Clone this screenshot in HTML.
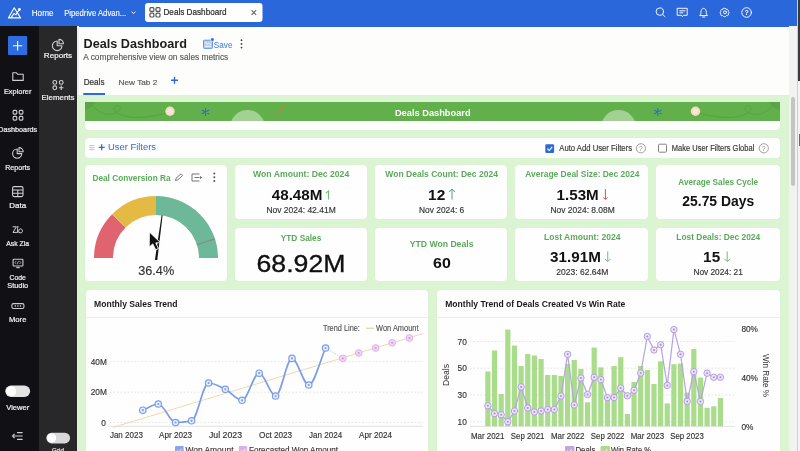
<!DOCTYPE html><html><head><meta charset="utf-8"><style>
*{margin:0;padding:0;box-sizing:border-box}
html,body{width:800px;height:451px;overflow:hidden;background:#fdfdfc;font-family:"Liberation Sans",sans-serif;position:relative}
.abs{position:absolute}
.card{position:absolute;background:#fefefe;border-radius:5px;box-shadow:0 0 1px rgba(0,0,0,0.06)}
svg{position:absolute;left:0;top:0;overflow:visible;will-change:transform}
text{font-family:"Liberation Sans",sans-serif}
</style></head><body>
<div class="abs" style="left:0;top:0;width:797px;height:27px;background:#2967da"></div>
<div class="abs" style="left:797px;top:0;width:3px;height:451px;background:#f3f3f3;border-left:1px solid #cfcfcf"></div>
<div class="abs" style="left:798px;top:0;width:2px;height:81px;background:#3a393b"></div>
<div class="abs" style="left:799px;top:134px;width:1px;height:12px;background:#3b6fd0"></div>
<div class="abs" style="left:0;top:26px;width:38.5px;height:425px;background:#111015"></div>
<div class="abs" style="left:38.5px;top:26px;width:38.5px;height:425px;background:#28272a"></div>
<div class="abs" style="left:77px;top:26px;width:2px;height:69px;background:#f0f0f0"></div>
<div class="abs" style="left:77px;top:95px;width:712px;height:356px;background:#dbf4d2"></div>
<div class="abs" style="left:789px;top:26px;width:8px;height:425px;background:#f2f2f2"></div>
<div class="abs" style="left:790.5px;top:97px;width:4.7px;height:89px;background:#c4c4c4;border-radius:3px"></div>
<div class="card" style="left:85px;top:102px;width:695px;height:28px;border-radius:0 0 4px 4px"></div>
<div class="card" style="left:85px;top:137.5px;width:695px;height:20px;border-radius:4px"></div>
<div class="card" style="left:85px;top:165px;width:142px;height:116px;border-radius:4px"></div>
<div class="card" style="left:235px;top:165px;width:132px;height:54px;border-radius:4px"></div>
<div class="card" style="left:375px;top:165px;width:132px;height:54px;border-radius:4px"></div>
<div class="card" style="left:515px;top:165px;width:133px;height:54px;border-radius:4px"></div>
<div class="card" style="left:656px;top:165px;width:124px;height:54px;border-radius:4px"></div>
<div class="card" style="left:235px;top:228px;width:132px;height:53px;border-radius:4px"></div>
<div class="card" style="left:375px;top:228px;width:132px;height:53px;border-radius:4px"></div>
<div class="card" style="left:515px;top:228px;width:133px;height:53px;border-radius:4px"></div>
<div class="card" style="left:656px;top:228px;width:124px;height:53px;border-radius:4px"></div>
<div class="card" style="left:85.5px;top:290px;width:342px;height:170px;border-radius:4px"></div>
<div class="card" style="left:436.5px;top:290px;width:343.5px;height:170px;border-radius:4px"></div>
<div class="abs" style="left:85.5px;top:316.5px;width:342px;height:1px;background:#eeeeee"></div>
<div class="abs" style="left:436.5px;top:316.5px;width:343.5px;height:1px;background:#eeeeee"></div>
<svg width="800" height="451" viewBox="0 0 800 451">
<g fill="none" stroke="#fff" stroke-width="1.1" stroke-linejoin="round" stroke-linecap="round">
<path d="M14.2 7.8 L8.4 17.9 L20.5 17.9 Z"/><path d="M11.2 17.4 L14.2 13.4 L15.9 14.8 L19.2 9.7"/></g>
<circle cx="19.4" cy="9.5" r="1.4" fill="#fff"/>
<path d="M131.5 11.6 L133.5 13.6 L135.5 11.6" fill="none" stroke="#fff" stroke-width="1"/>
<g fill="none" stroke="#fff" stroke-width="0.95" stroke-linecap="round" stroke-linejoin="round">
<circle cx="659.8" cy="11.6" r="3.7"/><path d="M662.5 14.3 L665 16.7"/>
<path d="M677.6 8.3 h9.6 v7 h-3.8 l-1 1.3 l-1 -1.3 h-3.8 z"/><path d="M679.8 10.8 h5.2 M679.8 12.8 h3"/>
<path d="M700 15.3 c0.8 -0.8 0.9 -1.6 0.9 -3 c0 -2.2 1.1 -3.9 2.7 -3.9 c1.6 0 2.7 1.7 2.7 3.9 c0 1.4 0.1 2.2 0.9 3 z"/><path d="M702.6 17 h2.2"/>
<circle cx="725" cy="12.3" r="1.5"/>
<g transform="translate(725,12.3) scale(0.78) translate(-725,-12.4)">
<path d="M725 7.4 l1.5 .4 .5 1.3 1.4 -.3 1 1 -.4 1.4 1 1 .1 1.4 -1.1 .9 .3 1.4 -1 1 -1.4 -.3 -1 1 -1.5 .5 -1.5 -.5 -.9 -1 -1.4 .3 -1 -1 .3 -1.4 -1.1 -.9 .1 -1.4 1 -1 -.4 -1.4 1 -1 1.4 .3 .5 -1.3 z" stroke-width="1.2"/></g>
<circle cx="746.6" cy="12.5" r="4.8"/></g>
<text x="746.6" y="15.1" font-size="7" font-weight="bold" fill="#fff" text-anchor="middle">?</text>
<rect x="145" y="3" width="117.5" height="19" rx="3" fill="#fff"/>
<g fill="none" stroke="#555" stroke-width="1.2">
<rect x="149.9" y="7.6" width="4" height="3.8" rx="1"/><rect x="156" y="7.6" width="4" height="3.8" rx="1"/>
<rect x="149.9" y="13.2" width="4" height="3.8" rx="1"/><rect x="156" y="13.2" width="4" height="3.8" rx="1"/></g>
<path d="M251.5 10.2 l4.7 4.7 M256.2 10.2 l-4.7 4.7" stroke="#666" stroke-width="1.1"/>

<text x="31.75" y="16" font-size="9.2" font-weight="normal" fill="#fff" text-anchor="start" textLength="21.7" lengthAdjust="spacingAndGlyphs" stroke="#fff" stroke-width="0.12">Home</text>
<text x="64.15" y="16" font-size="9.2" font-weight="normal" fill="#fff" text-anchor="start" textLength="62.1" lengthAdjust="spacingAndGlyphs" stroke="#fff" stroke-width="0.12">Pipedrive Advan...</text>
<text x="163.47" y="15.4" font-size="8.8" font-weight="normal" fill="#2a2a2a" text-anchor="start" textLength="63.06" lengthAdjust="spacingAndGlyphs" stroke="#2a2a2a" stroke-width="0.2">Deals Dashboard</text>
<rect x="8" y="36" width="19.2" height="19" rx="1" fill="#2d6de0"/>
<path d="M17.6 41 v9.4 M12.9 45.7 h9.4" stroke="#fff" stroke-width="1.15"/>
<g fill="none" stroke="#cfcfd2" stroke-width="1.1" stroke-linejoin="round" transform="translate(0,26)">
<path d="M12.8 46.8 h3.6 l1.2 1.4 h5.6 v6.2 h-10.4 z"/>
<rect x="13.1" y="84.4" width="3.7" height="3.7" rx="1"/><rect x="19.2" y="84.4" width="3.7" height="3.7" rx="1"/>
<rect x="13.1" y="90.4" width="3.7" height="3.7" rx="1"/><rect x="19.2" y="90.4" width="3.7" height="3.7" rx="1"/>
<path d="M17.2 123 a4.6 4.6 0 1 0 4.6 4.6 h-4.6 z"/><path d="M19 121.6 a4.2 4.2 0 0 1 4.2 4.2 h-4.2 z"/>
<rect x="12.6" y="160.6" width="10.4" height="10" rx="1.5"/><path d="M12.6 164 h10.4 M12.6 167.3 h10.4 M17.8 164 v6.6"/>
<rect x="13.1" y="233.2" width="9.8" height="6.8" rx="0.8"/><path d="M16.3 241.6 h3.4"/>
<path d="M16.2 235 l-1.2 1.5 1.2 1.5 M19.6 235 l1.2 1.5 -1.2 1.5 M18.5 234.8 l-1.2 3.5" stroke-width="0.7"/>
<rect x="11.9" y="277.6" width="12" height="4.9" rx="1.5"/>
<path d="M57.2 15 a4.8 4.8 0 1 0 4.8 4.8 h-4.8 z"/><path d="M59 13.4 a4.4 4.4 0 0 1 4.4 4.4 h-4.4 z"/>
<circle cx="54.8" cy="56.4" r="1.9"/><circle cx="61.2" cy="56.4" r="1.9"/>
<circle cx="54.8" cy="61.8" r="1.9"/><path d="M61.2 59.6 v4.4 M59 61.8 h4.4"/>
<path d="M12.4 410 l2.2 -2.2 M12.4 410 l2.2 2.2"/><path d="M17 406.6 h5.6 M13 410 h9.6 M17 413.4 h5.6"/>
</g>
<g fill="#e6e6e8"><circle cx="15.3" cy="306" r="0.75"/><circle cx="17.9" cy="306" r="0.75"/><circle cx="20.5" cy="306" r="0.75"/></g>
<g fill="none" stroke="#e6e6e8" stroke-width="0.9" stroke-linejoin="round" stroke-linecap="round">
<path d="M13 226.8 h3.4 l-3.4 5.6 h3.6"/><path d="M17.6 228.6 v3.8"/><circle cx="17.6" cy="227" r="0.3"/>
<path d="M19 232.4 c-1 -1.2 0 -3.6 1.6 -3.6 c1.6 0 2.4 2.4 1.4 3.6 c-0.6 0.6 -2.4 0.6 -3 0 z"/></g>
<rect x="5.3" y="385.5" width="24.8" height="11.5" rx="5.75" fill="#e3e3e3"/><circle cx="11.2" cy="391.25" r="5" fill="#fff"/>
<rect x="46.3" y="432.8" width="23.8" height="10.6" rx="5.3" fill="#d8d8d8"/><circle cx="51.6" cy="438.1" r="4.6" fill="#fff"/>

<text x="17.7" y="94.3" font-size="7.6" font-weight="normal" fill="#f0f0f2" text-anchor="middle" textLength="27.51" lengthAdjust="spacingAndGlyphs" stroke="#f0f0f2" stroke-width="0.22">Explorer</text>
<text x="17.7" y="132" font-size="7.6" font-weight="normal" fill="#f0f0f2" text-anchor="middle" textLength="38.91" lengthAdjust="spacingAndGlyphs" stroke="#f0f0f2" stroke-width="0.22">Dashboards</text>
<text x="17.7" y="170" font-size="7.6" font-weight="normal" fill="#f0f0f2" text-anchor="middle" textLength="24.91" lengthAdjust="spacingAndGlyphs" stroke="#f0f0f2" stroke-width="0.22">Reports</text>
<text x="17.7" y="208.3" font-size="7.6" font-weight="normal" fill="#f0f0f2" text-anchor="middle" textLength="16.91" lengthAdjust="spacingAndGlyphs" stroke="#f0f0f2" stroke-width="0.22">Data</text>
<text x="17.7" y="245.6" font-size="7.6" font-weight="normal" fill="#f0f0f2" text-anchor="middle" textLength="22.91" lengthAdjust="spacingAndGlyphs" stroke="#f0f0f2" stroke-width="0.22">Ask Zia</text>
<text x="17.7" y="280" font-size="7.6" font-weight="normal" fill="#f0f0f2" text-anchor="middle" textLength="16.41" lengthAdjust="spacingAndGlyphs" stroke="#f0f0f2" stroke-width="0.22">Code</text>
<text x="17.7" y="288.3" font-size="7.6" font-weight="normal" fill="#f0f0f2" text-anchor="middle" textLength="20.91" lengthAdjust="spacingAndGlyphs" stroke="#f0f0f2" stroke-width="0.22">Studio</text>
<text x="17.7" y="322" font-size="7.6" font-weight="normal" fill="#f0f0f2" text-anchor="middle" textLength="17.41" lengthAdjust="spacingAndGlyphs" stroke="#f0f0f2" stroke-width="0.22">More</text>
<text x="17.7" y="410.4" font-size="7.6" font-weight="normal" fill="#f0f0f2" text-anchor="middle" textLength="22.91" lengthAdjust="spacingAndGlyphs" stroke="#f0f0f2" stroke-width="0.22">Viewer</text>
<text x="58" y="58" font-size="7.6" font-weight="normal" fill="#f0f0f2" text-anchor="middle" textLength="28.31" lengthAdjust="spacingAndGlyphs" stroke="#f0f0f2" stroke-width="0.22">Reports</text>
<text x="58" y="99.5" font-size="7.6" font-weight="normal" fill="#f0f0f2" text-anchor="middle" textLength="32.91" lengthAdjust="spacingAndGlyphs" stroke="#f0f0f2" stroke-width="0.22">Elements</text>
<text x="58" y="451.5" font-size="6" font-weight="normal" fill="#e8e8ea" text-anchor="middle" textLength="11.72" lengthAdjust="spacingAndGlyphs" stroke="#e8e8ea" stroke-width="0.2">Grid</text>
<text x="83.49" y="47.5" font-size="12.6" font-weight="bold" fill="#1d1d1f" text-anchor="start" textLength="103.51" lengthAdjust="spacingAndGlyphs">Deals Dashboard</text>
<text x="83.31" y="60.2" font-size="8.2" font-weight="normal" fill="#5a5a5a" text-anchor="start" textLength="144.98" lengthAdjust="spacingAndGlyphs" stroke="#5a5a5a" stroke-width="0.15">A comprehensive view on sales metrics</text>
<rect x="203.5" y="40.2" width="9" height="8.2" rx="0.8" fill="#b9cff3" stroke="#5a8de0" stroke-width="0.9"/>
<path d="M205 46.6 h6 M205.3 42 l2 2.2 1.5 -1 2 1.6" fill="none" stroke="#f4f8ff" stroke-width="0.9"/>
<circle cx="212.4" cy="39.4" r="2.2" fill="#fdfdfc"/><circle cx="212.4" cy="39.4" r="1.5" fill="#2d6de0"/>
<g fill="#333"><circle cx="241.5" cy="40.2" r="0.85"/><circle cx="241.5" cy="43.9" r="0.85"/><circle cx="241.5" cy="47.6" r="0.85"/></g>
<path d="M174.5 76.7 v7 M171 80.2 h7" stroke="#2c6ade" stroke-width="1.4"/>
<rect x="83.3" y="93" width="21.7" height="2" fill="#2c6ade"/>

<text x="213.77" y="48" font-size="8.8" font-weight="normal" fill="#3a78d8" text-anchor="start" textLength="18.76" lengthAdjust="spacingAndGlyphs">Save</text>
<text x="83.71" y="84.5" font-size="8.2" font-weight="normal" fill="#333" text-anchor="start" textLength="20.78" lengthAdjust="spacingAndGlyphs" stroke="#333" stroke-width="0.2">Deals</text>
<text x="118.52" y="84.5" font-size="8" font-weight="normal" fill="#555" text-anchor="start" textLength="38.76" lengthAdjust="spacingAndGlyphs" stroke="#555" stroke-width="0.15">New Tab 2</text>
<defs><clipPath id="bn"><rect width="695" height="19"/></clipPath></defs><g transform="translate(85,102)" clip-path="url(#bn)">
<rect width="695" height="19" fill="#62b04b"/>
<path d="M0 0 L11 0 C 8 4, 4 7, 0 8.5 Z" fill="#5aa647"/>
<path d="M6.5 3 C 12 9, 18 12.5, 24 12.4 C 30 12.2, 36 9, 35 5.5 C 34 2, 29 3, 29 6.5 C 29 11, 40 15.5, 52 15.5 C 62 15.5, 72 13.5, 80 11.5" fill="none" stroke="#4f9c3f" stroke-width="0.7"/>
<circle cx="85" cy="9.3" r="4.7" fill="#f4dcc6"/><circle cx="85" cy="9.3" r="2.6" fill="#f9e8d8"/>
<g stroke="#2a6fd4" stroke-width="1.1" stroke-linecap="round"><path d="M120.5 6.5 v7 M117.2 8.3 l6.6 3.4 M117.2 11.7 l6.6 -3.4"/></g>
<circle cx="162.5" cy="25.5" r="17.5" fill="#a3d093"/>
<path d="M192.5 11 C 195 8.5, 196.5 5.5, 199.5 3.5" fill="none" stroke="#d9783a" stroke-width="1.2" stroke-linecap="round"/>
<path d="M695 0 L684 0 C 687 4, 691 7, 695 8.5 Z" fill="#5aa647"/>
<path d="M688.5 3 C 683 9, 677 12.5, 671 12.4 C 665 12.2, 659 9, 660 5.5 C 661 2, 666 3, 666 6.5 C 666 11, 655 15.5, 643 15.5 C 633 15.5, 623 13.5, 615 11.5" fill="none" stroke="#4f9c3f" stroke-width="0.7"/>
<circle cx="610.5" cy="9.3" r="4.7" fill="#f4dcc6"/><circle cx="610.5" cy="9.3" r="2.6" fill="#f9e8d8"/>
<g stroke="#2a6fd4" stroke-width="1.1" stroke-linecap="round"><path d="M572.8 6.5 v7 M569.5 8.3 l6.6 3.4 M569.5 11.7 l6.6 -3.4"/></g>
<circle cx="533.5" cy="25.5" r="17.5" fill="#a3d093"/>
</g>
<text x="394.92" y="115.8" font-size="9.7" font-weight="bold" fill="#fff" text-anchor="start" textLength="75.66" lengthAdjust="spacingAndGlyphs">Deals Dashboard</text>
<g stroke="#bbb" stroke-width="0.9"><path d="M89.3 145.6 h5 M89.3 147.6 h5 M89.3 149.6 h5"/></g>
<path d="M101.7 144.3 v6 M98.7 147.3 h6" stroke="#2d6bd6" stroke-width="1.3"/>
<rect x="545.3" y="144.3" width="8.8" height="8.7" rx="1.2" fill="#2f6ad8"/>
<path d="M547.4 148.6 l1.8 1.9 3 -3.6" fill="none" stroke="#fff" stroke-width="1.1"/>
<circle cx="640.9" cy="148.3" r="4.6" fill="none" stroke="#888" stroke-width="0.8"/>
<rect x="658.5" y="144.2" width="8" height="8" rx="1" fill="none" stroke="#777" stroke-width="0.9"/>
<circle cx="763.8" cy="148.3" r="4.6" fill="none" stroke="#888" stroke-width="0.8"/>
<text x="640.9" y="150.8" font-size="6.5" fill="#888" text-anchor="middle">?</text>
<text x="763.8" y="150.8" font-size="6.5" fill="#888" text-anchor="middle">?</text>

<text x="107.95" y="150.25" font-size="9.2" font-weight="normal" fill="#2d6bd6" text-anchor="start" textLength="48.1" lengthAdjust="spacingAndGlyphs">User Filters</text>
<text x="559.3" y="151.2" font-size="8.3" font-weight="normal" fill="#333" text-anchor="start" textLength="72.7" lengthAdjust="spacingAndGlyphs" stroke="#333" stroke-width="0.15">Auto Add User Filters</text>
<text x="671.8" y="151.2" font-size="8.3" font-weight="normal" fill="#333" text-anchor="start" textLength="82.5" lengthAdjust="spacingAndGlyphs" stroke="#333" stroke-width="0.15">Make User Filters Global</text>
<path d="M94.00 258.00 A62 62 0 0 1 112.16 214.16 L125.59 227.59 A43 43 0 0 0 113.00 258.00 Z" fill="#e0646f"/>
<path d="M112.16 214.16 A62 62 0 0 1 156.00 196.00 L156.00 215.00 A43 43 0 0 0 125.59 227.59 Z" fill="#e4ba45"/>
<path d="M156.00 196.00 A62 62 0 0 1 218.00 258.00 L199.00 258.00 A43 43 0 0 0 156.00 215.00 Z" fill="#6cb899"/>
<path d="M196.90 244.71 L214.97 238.84" stroke="#888" stroke-width="1.2"/>
<path d="M154.9 259.9 L157.3 259.9 L162.6 215.2 L161.6 215.2 Z" fill="#151515"/>
<path d="M149.4 232 L149.2 247 L152.8 243.9 L155.6 249.8 L158.4 248.5 L155.8 242.9 L160.6 242.7 Z" fill="#111" stroke="#fff" stroke-width="0.9" stroke-linejoin="round"/>
<text x="138.19" y="275" font-size="13.5" font-weight="normal" fill="#333" text-anchor="start" textLength="36.02" lengthAdjust="spacingAndGlyphs" stroke="#333" stroke-width="0.15">36.4%</text>
<text x="92.44" y="181.1" font-size="9.3" font-weight="bold" fill="#5aa95a" text-anchor="start" textLength="78.12" lengthAdjust="spacingAndGlyphs">Deal Conversion Ra</text>
<g fill="none" stroke="#777" stroke-width="1">
<path d="M175.5 180.6 l0.6 -2.4 5 -4.4 1.6 1.7 -5 4.4 z"/>
<path d="M199.5 174 h-7.5 v7 h7.5 M194.5 177.5 h5"/></g>
<path d="M200 175.8 l2.3 1.7 -2.3 1.7 z" fill="#777"/>
<g fill="#555"><circle cx="214.3" cy="173.5" r="1"/><circle cx="214.3" cy="177.3" r="1"/><circle cx="214.3" cy="181.1" r="1"/></g>

<text x="253.04" y="177.3" font-size="9.3" font-weight="bold" fill="#5aa95a" text-anchor="start" textLength="96.22" lengthAdjust="spacingAndGlyphs">Won Amount: Dec 2024</text>
<text x="271.72" y="199.5" font-size="14.6" font-weight="bold" fill="#111" text-anchor="start" textLength="50.75" lengthAdjust="spacingAndGlyphs">48.48M</text>
<path d="M328.6 199.6 V190.9 L325.9 193.2" fill="none" stroke="#72b872" stroke-width="1.1"/>
<text x="266.38" y="213.3" font-size="8.6" font-weight="normal" fill="#333" text-anchor="start" textLength="69.33" lengthAdjust="spacingAndGlyphs" stroke="#333" stroke-width="0.15">Nov 2024: 42.41M</text>
<text x="385.34" y="177.3" font-size="9.3" font-weight="bold" fill="#5aa95a" text-anchor="start" textLength="112.62" lengthAdjust="spacingAndGlyphs">Won Deals Count: Dec 2024</text>
<text x="428.12" y="199.5" font-size="14.6" font-weight="bold" fill="#111" text-anchor="start" textLength="17.15" lengthAdjust="spacingAndGlyphs">12</text>
<path d="M452.0 199.5 V189.5 M448.94 192.06000000000003 L452.0 189 L455.06 192.06000000000003" fill="none" stroke="#45a585" stroke-width="1"/>
<text x="419.08" y="213.3" font-size="8.6" font-weight="normal" fill="#333" text-anchor="start" textLength="45.13" lengthAdjust="spacingAndGlyphs" stroke="#333" stroke-width="0.15">Nov 2024: 6</text>
<text x="525.34" y="177.3" font-size="9.3" font-weight="bold" fill="#5aa95a" text-anchor="start" textLength="114.02" lengthAdjust="spacingAndGlyphs">Average Deal Size: Dec 2024</text>
<text x="556.62" y="199.5" font-size="14.6" font-weight="bold" fill="#111" text-anchor="start" textLength="42.15" lengthAdjust="spacingAndGlyphs">1.53M</text>
<path d="M605.4 189 V199.0 M603.1899999999999 197.29 L605.4 199.5 L607.61 197.29" fill="none" stroke="#d9534f" stroke-width="1"/>
<text x="550.48" y="213.3" font-size="8.6" font-weight="normal" fill="#333" text-anchor="start" textLength="64.33" lengthAdjust="spacingAndGlyphs" stroke="#333" stroke-width="0.15">Nov 2024: 8.08M</text>
<text x="678.34" y="184.5" font-size="9.3" font-weight="bold" fill="#5aa95a" text-anchor="start" textLength="79.82" lengthAdjust="spacingAndGlyphs">Average Sales Cycle</text>
<text x="682.32" y="206.1" font-size="14.6" font-weight="bold" fill="#111" text-anchor="start" textLength="71.85" lengthAdjust="spacingAndGlyphs">25.75 Days</text>
<text x="280.74" y="241.3" font-size="9.3" font-weight="bold" fill="#5aa95a" text-anchor="start" textLength="40.62" lengthAdjust="spacingAndGlyphs">YTD Sales</text>
<text x="256.53" y="271.8" font-size="24.5" font-weight="normal" fill="#111" text-anchor="start" textLength="88.94" lengthAdjust="spacingAndGlyphs" stroke="#111" stroke-width="0.35">68.92M</text>
<text x="409.74" y="246.5" font-size="9.3" font-weight="bold" fill="#5aa95a" text-anchor="start" textLength="63.72" lengthAdjust="spacingAndGlyphs">YTD Won Deals</text>
<text x="433.12" y="268" font-size="14.6" font-weight="bold" fill="#111" text-anchor="start" textLength="17.75" lengthAdjust="spacingAndGlyphs">60</text>
<text x="544.04" y="239.8" font-size="9.3" font-weight="bold" fill="#5aa95a" text-anchor="start" textLength="76.52" lengthAdjust="spacingAndGlyphs">Lost Amount: 2024</text>
<text x="550.12" y="261.7" font-size="14.6" font-weight="bold" fill="#111" text-anchor="start" textLength="50.75" lengthAdjust="spacingAndGlyphs">31.91M</text>
<path d="M607.75 251.5 V261.2 M604.9875 258.9375 L607.75 261.7 L610.5125 258.9375" fill="none" stroke="#72bd72" stroke-width="1"/>
<text x="556.18" y="275.3" font-size="8.6" font-weight="normal" fill="#333" text-anchor="start" textLength="52.33" lengthAdjust="spacingAndGlyphs" stroke="#333" stroke-width="0.15">2023: 62.64M</text>
<text x="676.34" y="239.8" font-size="9.3" font-weight="bold" fill="#5aa95a" text-anchor="start" textLength="83.82" lengthAdjust="spacingAndGlyphs">Lost Deals: Dec 2024</text>
<text x="703.12" y="261.7" font-size="14.6" font-weight="bold" fill="#111" text-anchor="start" textLength="17.05" lengthAdjust="spacingAndGlyphs">15</text>
<path d="M727.2 251.5 V261.2 M724.1400000000001 258.64000000000004 L727.2 261.7 L730.26 258.64000000000004" fill="none" stroke="#72bd72" stroke-width="1"/>
<text x="693.38" y="275.3" font-size="8.6" font-weight="normal" fill="#333" text-anchor="start" textLength="49.43" lengthAdjust="spacingAndGlyphs" stroke="#333" stroke-width="0.15">Nov 2024: 21</text>
<text x="94.02" y="306.6" font-size="9.7" font-weight="bold" fill="#1a1a1a" text-anchor="start" textLength="83.56" lengthAdjust="spacingAndGlyphs">Monthly Sales Trend</text>
<path d="M110 361.7 H423" stroke="#dcdcdc" stroke-width="0.8" stroke-dasharray="1.5 2"/>
<path d="M110 392.2 H423" stroke="#dcdcdc" stroke-width="0.8" stroke-dasharray="1.5 2"/>
<path d="M110 422.5 H423" stroke="#dcdcdc" stroke-width="0.8" stroke-dasharray="1.5 2"/>
<path d="M108 426.3 H423" stroke="#e2e2e2" stroke-width="1"/>
<text x="106.8" y="364.6" font-size="8.3" font-weight="normal" fill="#333" text-anchor="end" stroke="#333" stroke-width="0.15">40M</text>
<text x="106.8" y="395.1" font-size="8.3" font-weight="normal" fill="#333" text-anchor="end" stroke="#333" stroke-width="0.15">20M</text>
<text x="105.8" y="425.6" font-size="8.3" font-weight="normal" fill="#333" text-anchor="end" stroke="#333" stroke-width="0.15">0</text>
<text x="126.4" y="438" font-size="8.3" font-weight="normal" fill="#333" text-anchor="middle" textLength="33.0" lengthAdjust="spacingAndGlyphs" stroke="#333" stroke-width="0.15">Jan 2023</text>
<text x="175.6" y="438" font-size="8.3" font-weight="normal" fill="#333" text-anchor="middle" textLength="33.0" lengthAdjust="spacingAndGlyphs" stroke="#333" stroke-width="0.15">Apr 2023</text>
<text x="225.5" y="438" font-size="8.3" font-weight="normal" fill="#333" text-anchor="middle" textLength="33.0" lengthAdjust="spacingAndGlyphs" stroke="#333" stroke-width="0.15">Jul 2023</text>
<text x="275.6" y="438" font-size="8.3" font-weight="normal" fill="#333" text-anchor="middle" textLength="33.0" lengthAdjust="spacingAndGlyphs" stroke="#333" stroke-width="0.15">Oct 2023</text>
<text x="325.6" y="438" font-size="8.3" font-weight="normal" fill="#333" text-anchor="middle" textLength="33.0" lengthAdjust="spacingAndGlyphs" stroke="#333" stroke-width="0.15">Jan 2024</text>
<text x="375.6" y="438" font-size="8.3" font-weight="normal" fill="#333" text-anchor="middle" textLength="33.0" lengthAdjust="spacingAndGlyphs" stroke="#333" stroke-width="0.15">Apr 2024</text>
<path d="M113 427.4 L423.4 333.4" stroke="#f2d7ae" stroke-width="1"/>
<path d="M142.8 410.2 C147.97 408.13 153.13 404.00 158.3 404 C164.07 404.00 169.83 422.50 175.6 422.5 C180.93 422.50 186.27 421.88 191.6 420.8 C197.27 419.65 202.93 383.00 208.6 383 C214.17 383.00 219.73 386.63 225.3 389.3 C230.87 391.97 236.43 400.30 242 400.3 C247.73 400.30 253.47 373.20 259.2 373.2 C264.67 373.20 270.13 396.00 275.6 396 C281.07 396.00 286.53 358.40 292 358.4 C297.58 358.40 303.17 385.00 308.75 385 C314.37 385.00 319.98 360.33 325.6 348" fill="none" stroke="#7a9de9" stroke-width="1.7"/>
<path d="M325.6 348 L342.8 358.4" stroke="#bbb" stroke-width="0.9" stroke-dasharray="1.2 1.5"/>
<circle cx="142.8" cy="410.2" r="3.2" fill="#eaf0fc" stroke="#7a9de9" stroke-width="1.2"/><circle cx="142.8" cy="410.2" r="1.1" fill="#7a9de9"/>
<circle cx="158.3" cy="404" r="3.2" fill="#eaf0fc" stroke="#7a9de9" stroke-width="1.2"/><circle cx="158.3" cy="404" r="1.1" fill="#7a9de9"/>
<circle cx="175.6" cy="422.5" r="3.2" fill="#eaf0fc" stroke="#7a9de9" stroke-width="1.2"/><circle cx="175.6" cy="422.5" r="1.1" fill="#7a9de9"/>
<circle cx="191.6" cy="420.8" r="3.2" fill="#eaf0fc" stroke="#7a9de9" stroke-width="1.2"/><circle cx="191.6" cy="420.8" r="1.1" fill="#7a9de9"/>
<circle cx="208.6" cy="383" r="3.2" fill="#eaf0fc" stroke="#7a9de9" stroke-width="1.2"/><circle cx="208.6" cy="383" r="1.1" fill="#7a9de9"/>
<circle cx="225.3" cy="389.3" r="3.2" fill="#eaf0fc" stroke="#7a9de9" stroke-width="1.2"/><circle cx="225.3" cy="389.3" r="1.1" fill="#7a9de9"/>
<circle cx="242" cy="400.3" r="3.2" fill="#eaf0fc" stroke="#7a9de9" stroke-width="1.2"/><circle cx="242" cy="400.3" r="1.1" fill="#7a9de9"/>
<circle cx="259.2" cy="373.2" r="3.2" fill="#eaf0fc" stroke="#7a9de9" stroke-width="1.2"/><circle cx="259.2" cy="373.2" r="1.1" fill="#7a9de9"/>
<circle cx="275.6" cy="396" r="3.2" fill="#eaf0fc" stroke="#7a9de9" stroke-width="1.2"/><circle cx="275.6" cy="396" r="1.1" fill="#7a9de9"/>
<circle cx="292" cy="358.4" r="3.2" fill="#eaf0fc" stroke="#7a9de9" stroke-width="1.2"/><circle cx="292" cy="358.4" r="1.1" fill="#7a9de9"/>
<circle cx="308.75" cy="385" r="3.2" fill="#eaf0fc" stroke="#7a9de9" stroke-width="1.2"/><circle cx="308.75" cy="385" r="1.1" fill="#7a9de9"/>
<circle cx="325.6" cy="348" r="3.2" fill="#eaf0fc" stroke="#7a9de9" stroke-width="1.2"/><circle cx="325.6" cy="348" r="1.1" fill="#7a9de9"/>
<circle cx="342.8" cy="358.4" r="3.4" fill="#f0d4f3" stroke="#e2b2e8" stroke-width="1"/><circle cx="342.8" cy="358.4" r="1.1" fill="#d79be0"/>
<circle cx="358.75" cy="353" r="3.4" fill="#f0d4f3" stroke="#e2b2e8" stroke-width="1"/><circle cx="358.75" cy="353" r="1.1" fill="#d79be0"/>
<circle cx="375.6" cy="348" r="3.4" fill="#f0d4f3" stroke="#e2b2e8" stroke-width="1"/><circle cx="375.6" cy="348" r="1.1" fill="#d79be0"/>
<circle cx="392.2" cy="342.8" r="3.4" fill="#f0d4f3" stroke="#e2b2e8" stroke-width="1"/><circle cx="392.2" cy="342.8" r="1.1" fill="#d79be0"/>
<circle cx="409.4" cy="338" r="3.4" fill="#f0d4f3" stroke="#e2b2e8" stroke-width="1"/><circle cx="409.4" cy="338" r="1.1" fill="#d79be0"/>
<text x="322.91" y="331" font-size="8.2" font-weight="normal" fill="#555" text-anchor="start" textLength="36.98" lengthAdjust="spacingAndGlyphs" stroke="#555" stroke-width="0.15">Trend Line:</text>
<path d="M366 328.3 H374" stroke="#f1d4a8" stroke-width="1.3"/>
<text x="376.11" y="331" font-size="8.2" font-weight="normal" fill="#555" text-anchor="start" textLength="42.38" lengthAdjust="spacingAndGlyphs" stroke="#555" stroke-width="0.15">Won Amount</text>
<rect x="175" y="446" width="8.6" height="8.6" rx="1" fill="#86a6ec"/><rect x="238.8" y="446" width="8.4" height="8.6" rx="1" fill="#dab0e9"/>
<path d="M177.2 450.3 l1.6 1.7 2.8 -3.2 M241 450.3 l1.6 1.7 2.8 -3.2" fill="none" stroke="#fff" stroke-width="0.9"/>
<text x="185.48" y="452.8" font-size="8.6" font-weight="normal" fill="#333" text-anchor="start" textLength="48.03" lengthAdjust="spacingAndGlyphs" stroke="#333" stroke-width="0.15">Won Amount</text>
<text x="248.98" y="452.8" font-size="8.6" font-weight="normal" fill="#333" text-anchor="start" textLength="89.03" lengthAdjust="spacingAndGlyphs" stroke="#333" stroke-width="0.15">Forecasted Won Amount</text>
<text x="445.22" y="306.6" font-size="9.7" font-weight="bold" fill="#1a1a1a" text-anchor="start" textLength="180.16" lengthAdjust="spacingAndGlyphs">Monthly Trend of Deals Created Vs Win Rate</text>
<path d="M470 341.5 H735" stroke="#dcdcdc" stroke-width="0.8" stroke-dasharray="1.5 2"/>
<path d="M470 368.2 H735" stroke="#dcdcdc" stroke-width="0.8" stroke-dasharray="1.5 2"/>
<path d="M470 395 H735" stroke="#dcdcdc" stroke-width="0.8" stroke-dasharray="1.5 2"/>
<path d="M470 421.8 H735" stroke="#dcdcdc" stroke-width="0.8" stroke-dasharray="1.5 2"/>
<path d="M470 426.4 H735" stroke="#e2e2e2" stroke-width="1"/>
<text x="466.8" y="344.6" font-size="8.3" font-weight="normal" fill="#333" text-anchor="end" stroke="#333" stroke-width="0.15">70</text>
<text x="466.8" y="371.3" font-size="8.3" font-weight="normal" fill="#333" text-anchor="end" stroke="#333" stroke-width="0.15">50</text>
<text x="466.8" y="398.1" font-size="8.3" font-weight="normal" fill="#333" text-anchor="end" stroke="#333" stroke-width="0.15">30</text>
<text x="466.8" y="424.9" font-size="8.3" font-weight="normal" fill="#333" text-anchor="end" stroke="#333" stroke-width="0.15">10</text>
<text transform="translate(449,375) rotate(-90)" x="0" y="0" font-size="8.3" fill="#333" text-anchor="middle" textLength="22" lengthAdjust="spacingAndGlyphs">Deals</text>
<text transform="translate(763.4,375.5) rotate(90)" x="0" y="0" font-size="8.3" fill="#333" text-anchor="middle" textLength="43" lengthAdjust="spacingAndGlyphs">Win Rate %</text>
<text x="741.4" y="332.3" font-size="8.3" font-weight="normal" fill="#333" text-anchor="start" stroke="#333" stroke-width="0.15">80%</text>
<text x="741.4" y="381.2" font-size="8.3" font-weight="normal" fill="#333" text-anchor="start" stroke="#333" stroke-width="0.15">40%</text>
<text x="741.4" y="429.8" font-size="8.3" font-weight="normal" fill="#333" text-anchor="start" stroke="#333" stroke-width="0.15">0%</text>
<rect x="485.30" y="371.5" width="5.2" height="54.70" fill="#a9dc8b"/>
<rect x="491.94" y="350.5" width="5.2" height="75.70" fill="#a9dc8b"/>
<rect x="498.59" y="394" width="5.2" height="32.20" fill="#a9dc8b"/>
<rect x="505.23" y="329.6" width="5.2" height="96.60" fill="#a9dc8b"/>
<rect x="511.87" y="345.6" width="5.2" height="80.60" fill="#a9dc8b"/>
<rect x="518.51" y="366" width="5.2" height="60.20" fill="#a9dc8b"/>
<rect x="525.16" y="354" width="5.2" height="72.20" fill="#a9dc8b"/>
<rect x="531.80" y="355.5" width="5.2" height="70.70" fill="#a9dc8b"/>
<rect x="538.44" y="359" width="5.2" height="67.20" fill="#a9dc8b"/>
<rect x="545.09" y="375" width="5.2" height="51.20" fill="#a9dc8b"/>
<rect x="551.73" y="375" width="5.2" height="51.20" fill="#a9dc8b"/>
<rect x="558.37" y="376" width="5.2" height="50.20" fill="#a9dc8b"/>
<rect x="565.01" y="364" width="5.2" height="62.20" fill="#a9dc8b"/>
<rect x="571.66" y="360" width="5.2" height="66.20" fill="#a9dc8b"/>
<rect x="578.30" y="369" width="5.2" height="57.20" fill="#a9dc8b"/>
<rect x="584.94" y="402.3" width="5.2" height="23.90" fill="#a9dc8b"/>
<rect x="591.59" y="347.6" width="5.2" height="78.60" fill="#a9dc8b"/>
<rect x="598.23" y="367.4" width="5.2" height="58.80" fill="#a9dc8b"/>
<rect x="604.87" y="398" width="5.2" height="28.20" fill="#a9dc8b"/>
<rect x="611.51" y="366" width="5.2" height="60.20" fill="#a9dc8b"/>
<rect x="618.16" y="357.2" width="5.2" height="69.00" fill="#a9dc8b"/>
<rect x="624.80" y="414" width="5.2" height="12.20" fill="#a9dc8b"/>
<rect x="631.44" y="382" width="5.2" height="44.20" fill="#a9dc8b"/>
<rect x="638.09" y="366" width="5.2" height="60.20" fill="#a9dc8b"/>
<rect x="644.73" y="370" width="5.2" height="56.20" fill="#a9dc8b"/>
<rect x="651.37" y="384" width="5.2" height="42.20" fill="#a9dc8b"/>
<rect x="658.01" y="361.3" width="5.2" height="64.90" fill="#a9dc8b"/>
<rect x="664.66" y="403.4" width="5.2" height="22.80" fill="#a9dc8b"/>
<rect x="671.30" y="364.2" width="5.2" height="62.00" fill="#a9dc8b"/>
<rect x="677.94" y="363.6" width="5.2" height="62.60" fill="#a9dc8b"/>
<rect x="684.59" y="392.7" width="5.2" height="33.50" fill="#a9dc8b"/>
<rect x="691.23" y="349" width="5.2" height="77.20" fill="#a9dc8b"/>
<rect x="697.87" y="377.6" width="5.2" height="48.60" fill="#a9dc8b"/>
<rect x="704.51" y="407.8" width="5.2" height="18.40" fill="#a9dc8b"/>
<rect x="711.16" y="406.3" width="5.2" height="19.90" fill="#a9dc8b"/>
<rect x="717.80" y="398" width="5.2" height="28.20" fill="#a9dc8b"/>
<polyline points="487.90,405.8 494.54,413.6 501.19,414.8 507.83,421.7 514.47,411 521.11,386.9 527.76,408 534.40,412 541.04,411 547.69,409.5 554.33,409.5 560.97,396 567.61,354.3 574.26,405 580.90,378 587.54,394.5 594.19,377.3 600.83,379.6 607.47,397.6 614.11,397.6 620.76,388 627.40,395.8 634.04,390.3 640.69,373 647.33,336.4 653.97,350 660.61,344.7 667.26,385.4 673.90,329.6 680.54,354.3 687.19,401.4 693.83,371.7 700.47,401.4 707.11,373.2 713.76,377.3 720.40,377.3" fill="none" stroke="#b8a2e2" stroke-width="1.2"/>
<circle cx="487.90" cy="405.8" r="3.2" fill="#ece4f8" stroke="#b39de0" stroke-width="1"/><circle cx="487.90" cy="405.8" r="1" fill="#a58bd8"/>
<circle cx="494.54" cy="413.6" r="3.2" fill="#ece4f8" stroke="#b39de0" stroke-width="1"/><circle cx="494.54" cy="413.6" r="1" fill="#a58bd8"/>
<circle cx="501.19" cy="414.8" r="3.2" fill="#ece4f8" stroke="#b39de0" stroke-width="1"/><circle cx="501.19" cy="414.8" r="1" fill="#a58bd8"/>
<circle cx="507.83" cy="421.7" r="3.2" fill="#ece4f8" stroke="#b39de0" stroke-width="1"/><circle cx="507.83" cy="421.7" r="1" fill="#a58bd8"/>
<circle cx="514.47" cy="411" r="3.2" fill="#ece4f8" stroke="#b39de0" stroke-width="1"/><circle cx="514.47" cy="411" r="1" fill="#a58bd8"/>
<circle cx="521.11" cy="386.9" r="3.2" fill="#ece4f8" stroke="#b39de0" stroke-width="1"/><circle cx="521.11" cy="386.9" r="1" fill="#a58bd8"/>
<circle cx="527.76" cy="408" r="3.2" fill="#ece4f8" stroke="#b39de0" stroke-width="1"/><circle cx="527.76" cy="408" r="1" fill="#a58bd8"/>
<circle cx="534.40" cy="412" r="3.2" fill="#ece4f8" stroke="#b39de0" stroke-width="1"/><circle cx="534.40" cy="412" r="1" fill="#a58bd8"/>
<circle cx="541.04" cy="411" r="3.2" fill="#ece4f8" stroke="#b39de0" stroke-width="1"/><circle cx="541.04" cy="411" r="1" fill="#a58bd8"/>
<circle cx="547.69" cy="409.5" r="3.2" fill="#ece4f8" stroke="#b39de0" stroke-width="1"/><circle cx="547.69" cy="409.5" r="1" fill="#a58bd8"/>
<circle cx="554.33" cy="409.5" r="3.2" fill="#ece4f8" stroke="#b39de0" stroke-width="1"/><circle cx="554.33" cy="409.5" r="1" fill="#a58bd8"/>
<circle cx="560.97" cy="396" r="3.2" fill="#ece4f8" stroke="#b39de0" stroke-width="1"/><circle cx="560.97" cy="396" r="1" fill="#a58bd8"/>
<circle cx="567.61" cy="354.3" r="3.2" fill="#ece4f8" stroke="#b39de0" stroke-width="1"/><circle cx="567.61" cy="354.3" r="1" fill="#a58bd8"/>
<circle cx="574.26" cy="405" r="3.2" fill="#ece4f8" stroke="#b39de0" stroke-width="1"/><circle cx="574.26" cy="405" r="1" fill="#a58bd8"/>
<circle cx="580.90" cy="378" r="3.2" fill="#ece4f8" stroke="#b39de0" stroke-width="1"/><circle cx="580.90" cy="378" r="1" fill="#a58bd8"/>
<circle cx="587.54" cy="394.5" r="3.2" fill="#ece4f8" stroke="#b39de0" stroke-width="1"/><circle cx="587.54" cy="394.5" r="1" fill="#a58bd8"/>
<circle cx="594.19" cy="377.3" r="3.2" fill="#ece4f8" stroke="#b39de0" stroke-width="1"/><circle cx="594.19" cy="377.3" r="1" fill="#a58bd8"/>
<circle cx="600.83" cy="379.6" r="3.2" fill="#ece4f8" stroke="#b39de0" stroke-width="1"/><circle cx="600.83" cy="379.6" r="1" fill="#a58bd8"/>
<circle cx="607.47" cy="397.6" r="3.2" fill="#ece4f8" stroke="#b39de0" stroke-width="1"/><circle cx="607.47" cy="397.6" r="1" fill="#a58bd8"/>
<circle cx="614.11" cy="397.6" r="3.2" fill="#ece4f8" stroke="#b39de0" stroke-width="1"/><circle cx="614.11" cy="397.6" r="1" fill="#a58bd8"/>
<circle cx="620.76" cy="388" r="3.2" fill="#ece4f8" stroke="#b39de0" stroke-width="1"/><circle cx="620.76" cy="388" r="1" fill="#a58bd8"/>
<circle cx="627.40" cy="395.8" r="3.2" fill="#ece4f8" stroke="#b39de0" stroke-width="1"/><circle cx="627.40" cy="395.8" r="1" fill="#a58bd8"/>
<circle cx="634.04" cy="390.3" r="3.2" fill="#ece4f8" stroke="#b39de0" stroke-width="1"/><circle cx="634.04" cy="390.3" r="1" fill="#a58bd8"/>
<circle cx="640.69" cy="373" r="3.2" fill="#ece4f8" stroke="#b39de0" stroke-width="1"/><circle cx="640.69" cy="373" r="1" fill="#a58bd8"/>
<circle cx="647.33" cy="336.4" r="3.2" fill="#ece4f8" stroke="#b39de0" stroke-width="1"/><circle cx="647.33" cy="336.4" r="1" fill="#a58bd8"/>
<circle cx="653.97" cy="350" r="3.2" fill="#ece4f8" stroke="#b39de0" stroke-width="1"/><circle cx="653.97" cy="350" r="1" fill="#a58bd8"/>
<circle cx="660.61" cy="344.7" r="3.2" fill="#ece4f8" stroke="#b39de0" stroke-width="1"/><circle cx="660.61" cy="344.7" r="1" fill="#a58bd8"/>
<circle cx="667.26" cy="385.4" r="3.2" fill="#ece4f8" stroke="#b39de0" stroke-width="1"/><circle cx="667.26" cy="385.4" r="1" fill="#a58bd8"/>
<circle cx="673.90" cy="329.6" r="3.2" fill="#ece4f8" stroke="#b39de0" stroke-width="1"/><circle cx="673.90" cy="329.6" r="1" fill="#a58bd8"/>
<circle cx="680.54" cy="354.3" r="3.2" fill="#ece4f8" stroke="#b39de0" stroke-width="1"/><circle cx="680.54" cy="354.3" r="1" fill="#a58bd8"/>
<circle cx="687.19" cy="401.4" r="3.2" fill="#ece4f8" stroke="#b39de0" stroke-width="1"/><circle cx="687.19" cy="401.4" r="1" fill="#a58bd8"/>
<circle cx="693.83" cy="371.7" r="3.2" fill="#ece4f8" stroke="#b39de0" stroke-width="1"/><circle cx="693.83" cy="371.7" r="1" fill="#a58bd8"/>
<circle cx="700.47" cy="401.4" r="3.2" fill="#ece4f8" stroke="#b39de0" stroke-width="1"/><circle cx="700.47" cy="401.4" r="1" fill="#a58bd8"/>
<circle cx="707.11" cy="373.2" r="3.2" fill="#ece4f8" stroke="#b39de0" stroke-width="1"/><circle cx="707.11" cy="373.2" r="1" fill="#a58bd8"/>
<circle cx="713.76" cy="377.3" r="3.2" fill="#ece4f8" stroke="#b39de0" stroke-width="1"/><circle cx="713.76" cy="377.3" r="1" fill="#a58bd8"/>
<circle cx="720.40" cy="377.3" r="3.2" fill="#ece4f8" stroke="#b39de0" stroke-width="1"/><circle cx="720.40" cy="377.3" r="1" fill="#a58bd8"/>
<text x="487.7" y="438.5" font-size="8.3" font-weight="normal" fill="#333" text-anchor="middle" textLength="33.5" lengthAdjust="spacingAndGlyphs" stroke="#333" stroke-width="0.15">Mar 2021</text>
<text x="527.6" y="438.5" font-size="8.3" font-weight="normal" fill="#333" text-anchor="middle" textLength="33.5" lengthAdjust="spacingAndGlyphs" stroke="#333" stroke-width="0.15">Sep 2021</text>
<text x="567.7" y="438.5" font-size="8.3" font-weight="normal" fill="#333" text-anchor="middle" textLength="33.5" lengthAdjust="spacingAndGlyphs" stroke="#333" stroke-width="0.15">Mar 2022</text>
<text x="607.6" y="438.5" font-size="8.3" font-weight="normal" fill="#333" text-anchor="middle" textLength="33.5" lengthAdjust="spacingAndGlyphs" stroke="#333" stroke-width="0.15">Sep 2022</text>
<text x="647.4" y="438.5" font-size="8.3" font-weight="normal" fill="#333" text-anchor="middle" textLength="33.5" lengthAdjust="spacingAndGlyphs" stroke="#333" stroke-width="0.15">Mar 2023</text>
<text x="687" y="438.5" font-size="8.3" font-weight="normal" fill="#333" text-anchor="middle" textLength="33.5" lengthAdjust="spacingAndGlyphs" stroke="#333" stroke-width="0.15">Sep 2023</text>
<rect x="565" y="446" width="9.4" height="9" rx="1" fill="#bda7e6"/><rect x="600.5" y="446" width="9.5" height="9" rx="1" fill="#a9dc8b"/>
<path d="M567.4 450.5 l1.6 1.7 2.8 -3.2 M603 450.5 l1.6 1.7 2.8 -3.2" fill="none" stroke="#fff" stroke-width="0.9"/>
<text x="575.48" y="453" font-size="8.6" font-weight="normal" fill="#333" text-anchor="start" textLength="20.03" lengthAdjust="spacingAndGlyphs" stroke="#333" stroke-width="0.15">Deals</text>
<text x="611.08" y="453" font-size="8.6" font-weight="normal" fill="#333" text-anchor="start" textLength="39.83" lengthAdjust="spacingAndGlyphs" stroke="#333" stroke-width="0.15">Win Rate %</text>
</svg>
</body></html>
